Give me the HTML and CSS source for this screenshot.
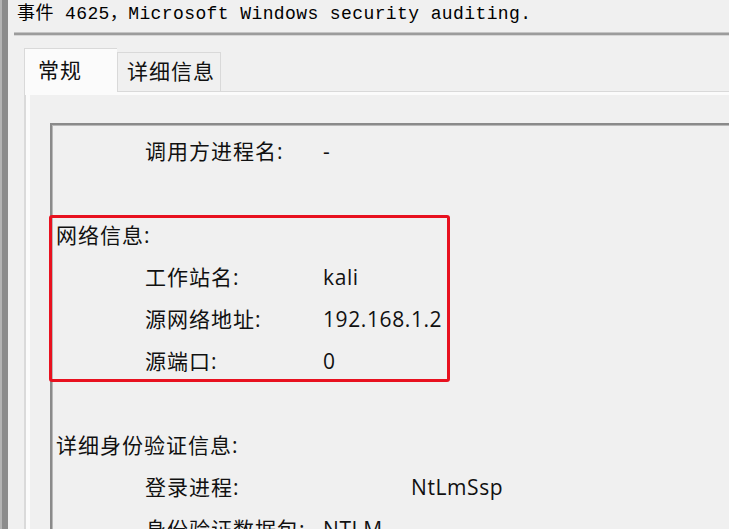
FILE: index.html
```html
<!DOCTYPE html>
<html lang="zh-CN">
<head>
<meta charset="utf-8">
<title>事件 4625</title>
<link rel="stylesheet" href="styles.css">
</head>
<body>
<div class="window">
  <div class="edge"></div>
  <div class="main">
    <div class="title">事件 4625，Microsoft Windows security auditing.</div>
    <div class="sep"></div>
    <div class="tabs">
      <div class="tab tab-active">常规</div>
      <div class="tab">详细信息</div>
    </div>
    <div class="panel">
      <div class="box">
        <div class="row"><span></span><span class="label">调用方进程名:</span><span class="value">-</span></div>
        <div class="row row-blank"></div>
        <div class="row heading">网络信息:</div>
        <div class="row"><span></span><span class="label">工作站名:</span><span class="value">kali</span></div>
        <div class="row"><span></span><span class="label">源网络地址:</span><span class="value">192.168.1.2</span></div>
        <div class="row"><span></span><span class="label">源端口:</span><span class="value">0</span></div>
        <div class="row row-blank"></div>
        <div class="row heading">详细身份验证信息:</div>
        <div class="row row-wide"><span></span><span class="label">登录进程:</span><span class="value">NtLmSsp</span></div>
        <div class="row"><span></span><span class="label">身份验证数据包:</span><span class="value">NTLM</span></div>
        <div class="highlight"></div>
      </div>
    </div>
  </div>
</div>
</body>
</html>
```

FILE: styles.css
```css
html, body {
  margin: 0;
  padding: 0;
}

body {
  width: 729px;
  height: 529px;
  overflow: hidden;
  background: #f0f0f0;
  color: #111;
  font-family: "Open Sans", "Noto Sans CJK SC", sans-serif;
}

.window {
  display: flex;
  height: 529px;
}

.edge {
  width: 6px;
  flex-shrink: 0;
  background: #8c8c8c;
  border-left: 2px solid #b4b4b4;
}

.main {
  flex: 1;
  display: flex;
  flex-direction: column;
  padding-left: 6px;
  min-width: 0;
  min-height: 0;
}

.title {
  flex-shrink: 0;
  height: 32px;
  line-height: 28px;
  padding-left: 3px;
  font-family: "Liberation Mono", "Noto Sans CJK SC", monospace;
  font-size: 18px;
  letter-spacing: 0.4px;
  color: #000;
  white-space: nowrap;
}

.sep {
  flex-shrink: 0;
  height: 2px;
  background: #9c9c9c;
  border-top: 1px solid #c4c4c4;
  border-bottom: 1px solid #d6d6d6;
}

.tabs {
  flex-shrink: 0;
  display: flex;
  align-items: flex-end;
  margin-left: 10px;
  margin-top: 12px;
}

.tab {
  box-sizing: border-box;
  height: 39px;
  width: 104px;
  padding-left: 9px;
  line-height: 37px;
  font-size: 21px;
  letter-spacing: 1px;
  background: #f0f0f0;
  border: 1px solid #d9d9d9;
  border-bottom: none;
  color: #111;
}

.tab-active {
  position: relative;
  z-index: 1;
  width: 93px;
  height: 47px;
  padding-left: 13px;
  line-height: 42px;
  margin-bottom: -4px;
  background: #fbfbfb;
  border-right: none;
}

.panel {
  flex: 1;
  min-height: 0;
  overflow: hidden;
  margin-left: 10px;
  border-top: 1px solid #d9d9d9;
  border-left: 2px solid #dadada;
  box-shadow: inset 4px 3px 0 #fbfbfb;
  padding-top: 31px;
  padding-left: 24px;
}

.box {
  position: relative;
  height: 100%;
  border-top: 2px solid #8a8a8a;
  border-left: 2px solid #8a8a8a;
  box-shadow: inset 1px 1px 0 #b8b8b8;
  padding-top: 5px;
  padding-left: 1px;
  font-size: 21px;
}

.row {
  display: grid;
  grid-template-columns: 92px 178px auto;
  height: 42px;
  line-height: 42px;
  white-space: nowrap;
}

.label {
  letter-spacing: 1px;
}

.value {
  letter-spacing: 0.6px;
}

.row-wide {
  grid-template-columns: 92px 266px auto;
}

.heading {
  display: block;
  padding-left: 3px;
  letter-spacing: 1px;
}

.highlight {
  position: absolute;
  left: -3px;
  top: 90px;
  width: 401px;
  height: 167px;
  box-sizing: border-box;
  border: 3px solid #e8111f;
  border-radius: 3px;
}
```
